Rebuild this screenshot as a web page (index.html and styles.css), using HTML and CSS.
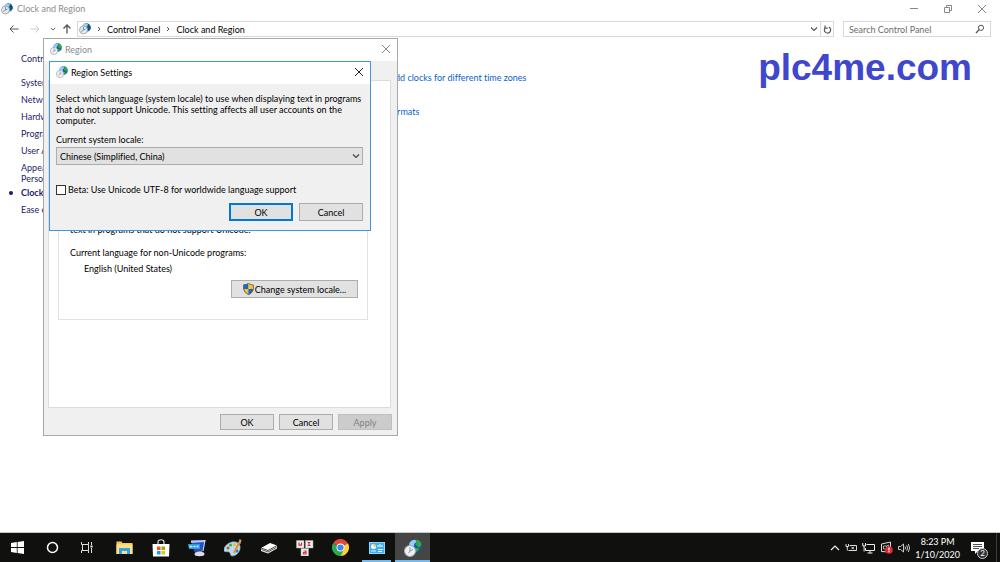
FILE: index.html
```html
<!DOCTYPE html>
<html lang="en">
<head>
<meta charset="utf-8">
<title>Clock and Region</title>
<link rel="stylesheet" href="styles.css">
</head>
<body>
<svg width="0" height="0" class="defs" aria-hidden="true">
  <defs>
    <symbol id="globe-clock" viewBox="0 0 24 24">
      <circle cx="15" cy="9" r="8.500" fill="#1b57b4"/>
      <path d="M7 6c1-3 4-5 8-5l2 3-3 2-1 4-4 1-2-2z" fill="#8fd0ee"/>
      <path d="M16 1c4 0 7 3 7.300 7l-3 3-2-1-3-3 2-2z" fill="#2fae3c"/>
      <path d="M15 12l4 0 1 2-3 3-3-1z" fill="#2fae3c"/>
      <circle cx="8" cy="16" r="7.300" fill="#eef1f4" stroke="#a3adb7" stroke-width="1.400"/>
      <path d="M8 11v5l4-2M8 16l-2 3" fill="none" stroke="#7c8996" stroke-width="1.200"/>
    </symbol>
    <symbol id="clock-globe-blue" viewBox="0 0 24 24">
      <circle cx="15" cy="9" r="8.500" fill="#2a6a9f"/>
      <path d="M10 1l8 1-2 5-5 2-5-3z" fill="#9fcfe6"/>
      <path d="M18 2c4 2 6 6 5 10l-4 4-1-6z" fill="#164f86"/>
      <circle cx="9" cy="14" r="8" fill="#dfe9ee" stroke="#8ba0ac" stroke-width="1.600"/>
      <path d="M9 8v6l4-2M9 14l-4 3" fill="none" stroke="#5f7b8c" stroke-width="1.500"/>
    </symbol>
    <symbol id="close" viewBox="0 0 10 10"><path d="M1 1l8 8M9 1l-8 8" fill="none" stroke="currentColor"/></symbol>
    <symbol id="down" viewBox="0 0 8 8"><path d="M1 2.500l3 3 3-3" fill="none" stroke="currentColor" stroke-width="1.200"/></symbol>
  </defs>
</svg>

<div class="explorer">
  <header class="titlebar">
    <svg class="app-icon"><use href="#clock-globe-blue"/></svg>
    <h1 class="window-title">Clock and Region</h1>
    <div class="window-controls">
      <button class="icon-button" aria-label="Minimize"><svg width="10" height="10" viewBox="0 0 10 10"><path d="M1 4.500h8" stroke="currentColor"/></svg></button>
      <button class="icon-button" aria-label="Restore"><svg width="10" height="10" viewBox="0 0 10 10"><path d="M1.500 3.500h5v5h-5zM3.500 3.500v-2h5v5h-2" fill="none" stroke="currentColor"/></svg></button>
      <button class="icon-button" aria-label="Close"><svg width="10" height="10"><use href="#close"/></svg></button>
    </div>
  </header>

  <nav class="navbar" aria-label="Address">
    <div class="history">
      <button class="icon-button" aria-label="Back"><svg width="10" height="10" viewBox="0 0 10 10"><path d="M9.500 5H1M4.500 1.500L1 5l3.500 3.500" fill="none" stroke="currentColor"/></svg></button>
      <button class="icon-button faded" aria-label="Forward"><svg width="10" height="10" viewBox="0 0 10 10"><path d="M.5 5H9M5.500 1.500L9 5 5.500 8.500" fill="none" stroke="currentColor"/></svg></button>
      <button class="icon-button recent" aria-label="Recent locations"><svg width="6" height="6"><use href="#down"/></svg></button>
      <button class="icon-button" aria-label="Up"><svg width="10" height="10" viewBox="0 0 10 10"><path d="M5 9.500V1M1.500 4.500L5 1l3.500 3.500" fill="none" stroke="currentColor" stroke-width="1.300"/></svg></button>
    </div>
    <div class="address">
      <svg class="app-icon"><use href="#clock-globe-blue"/></svg>
      <svg class="sep" width="4" height="6" viewBox="0 0 4 6"><path d="M1 1l2 2-2 2" fill="none" stroke="currentColor"/></svg>
      <a class="crumb" href="#">Control Panel</a>
      <svg class="sep" width="4" height="6" viewBox="0 0 4 6"><path d="M1 1l2 2-2 2" fill="none" stroke="currentColor"/></svg>
      <a class="crumb" href="#">Clock and Region</a>
      <button class="icon-button address-drop" aria-label="Previous locations"><svg width="8" height="8"><use href="#down"/></svg></button>
      <button class="icon-button refresh" aria-label="Refresh"><svg width="9" height="9" viewBox="0 0 10 10"><path d="M6.500 2.300A3.500 3.500 0 1 1 2.500 3M2.200.5v3h3" fill="none" stroke="currentColor" stroke-width="1.300"/></svg></button>
    </div>
    <div class="search">
      <input type="search" placeholder="Search Control Panel" aria-label="Search Control Panel">
      <svg width="10" height="10" viewBox="0 0 10 10"><circle cx="6" cy="3.800" r="2.600" fill="none" stroke="#555"/><path d="M4 5.800L1 9" stroke="#555" stroke-width="1.300"/></svg>
    </div>
  </nav>

  <main class="content">
    <ul class="sidebar">
      <li class="home"><a href="#">Control Panel Home</a></li>
      <li><a href="#">System and Security</a></li>
      <li><a href="#">Network and Internet</a></li>
      <li><a href="#">Hardware and Sound</a></li>
      <li><a href="#">Programs</a></li>
      <li><a href="#">User Accounts</a></li>
      <li><a href="#">Appearance and<br>Personalization</a></li>
      <li class="current"><a href="#" aria-current="page">Clock and Region</a></li>
      <li><a href="#">Ease of Access</a></li>
    </ul>
    <div class="tasks">
      <a href="#">Add clocks for different time zones</a>
      <a href="#">formats</a>
    </div>
    <p class="watermark">plc4me.com</p>
  </main>
</div>

<section class="dialog region" aria-label="Region">
  <header class="dialog-title">
    <svg class="app-icon"><use href="#globe-clock"/></svg>
    <h2>Region</h2>
    <button class="icon-button" aria-label="Close"><svg width="10" height="10"><use href="#close"/></svg></button>
  </header>
  <div class="tab-panel">
    <div class="group">
      <p>text in programs that do not support Unicode.</p>
      <p class="group-label">Current language for non-Unicode programs:</p>
      <p class="group-value">English (United States)</p>
      <button class="button shield-button">
        <svg width="11" height="12" viewBox="0 0 11 12"><path d="M5.500 0C4 1.200 2 1.600.4 1.600V5c0 3.200 2 5.500 5.100 7z" fill="#1769c4"/><path d="M5.500 0C7 1.200 9 1.600 10.600 1.600V5c0 3.200-2 5.500-5.100 7z" fill="#fcbf2d"/><path d="M.5 6h5v6C2.500 10.500.8 8.500.5 6z" fill="#fcbf2d"/><path d="M10.500 6h-5v6c3-1.500 4.700-3.500 5-6z" fill="#1769c4"/><path d="M5.500.5C4 1.500 2.200 2 .6 2v3c0 3 2 5 4.900 6.500C8.400 10 10.400 8 10.400 5V2C8.800 2 7 1.500 5.500.5z" fill="none" stroke="#54606b" stroke-width=".8"/></svg>
        <span>Change system locale...</span>
      </button>
    </div>
  </div>
  <footer class="dialog-actions">
    <button class="button">OK</button>
    <button class="button">Cancel</button>
    <button class="button" disabled>Apply</button>
  </footer>
</section>

<section class="dialog settings" role="dialog" aria-label="Region Settings">
  <header class="dialog-title">
    <svg class="app-icon"><use href="#globe-clock"/></svg>
    <h2>Region Settings</h2>
    <button class="icon-button" aria-label="Close"><svg width="10" height="10"><use href="#close"/></svg></button>
  </header>
  <form class="settings-body">
    <p class="explanation">Select which language (system locale) to use when displaying text in programs<br>that do not support Unicode. This setting affects all user accounts on the<br>computer.</p>
    <label class="locale-label" for="locale">Current system locale:</label>
    <div class="select-wrap">
      <select id="locale"><option>Chinese (Simplified, China)</option></select>
      <svg width="8" height="8"><use href="#down"/></svg>
    </div>
    <div class="check-row">
      <input type="checkbox" id="utf8">
      <label for="utf8">Beta: Use Unicode UTF-8 for worldwide language support</label>
    </div>
    <div class="settings-actions">
      <button type="button" class="button primary">OK</button>
      <button type="button" class="button">Cancel</button>
    </div>
  </form>
</section>

<footer class="taskbar">
  <div class="system-buttons">
    <button class="task" aria-label="Start"><svg width="13" height="13" viewBox="0 0 13 13"><path d="M0 2l5.800-.9v5H0zM6.600 1L13 0v6.100H6.600zM0 6.900h5.800v5L0 11zM6.600 6.900H13V13l-6.400-1z" fill="#fff"/></svg></button>
    <button class="task" aria-label="Cortana"><svg width="13" height="13" viewBox="0 0 13 13"><circle cx="6.500" cy="6.500" r="5" fill="none" stroke="#fff" stroke-width="1.500"/></svg></button>
    <button class="task" aria-label="Task View"><svg width="13" height="13" viewBox="0 0 13 13"><path d="M.5 1v2.500h7V1M.5 12V9.500h7V12M1.500 4v5M7.500 3.500v6M10.500 1v3M10.500 7v5" fill="none" stroke="#ddd"/><path d="M9.500 4.500h2v2h-2z" fill="#fff"/></svg></button>
  </div>
  <div class="apps">
    <button class="task" aria-label="File Explorer"><svg width="17" height="15" viewBox="0 0 17 15"><path d="M.5 1.500h5l1 1.500h10v11H.5z" fill="#f5c956"/><path d="M.5 4.500h16v9.500H.5z" fill="#ffe08a"/><path d="M3 14V8h11v6h-3v-3H6v3z" fill="#35a4e6"/></svg></button>
    <button class="task" aria-label="Store"><svg width="18" height="18" viewBox="0 0 18 18"><path d="M6 5V3c0-3 6-3 6 0v2" fill="none" stroke="#ddd" stroke-width="1.200"/><path d="M.5 5h17l-.5 12.500H1z" fill="#fff"/><path d="M5 7.500h3.500V11H5z" fill="#f25022"/><path d="M9.500 7.500H13V11H9.500z" fill="#7fba00"/><path d="M5 12h3.500v3.500H5z" fill="#00a4ef"/><path d="M9.500 12H13v3.500H9.500z" fill="#ffb900"/></svg></button>
    <button class="task" aria-label="Control software"><svg width="18" height="18" viewBox="0 0 18 18"><path d="M3 1.500L17.500 1l-2 11-9 1z" fill="#2b4fc0"/><path d="M3 1.500L17.500 1 17 3 3 4z" fill="#b4c6f4"/><path d="M16.500 1h1l-2 11-1 .2z" fill="#cfd8ee"/><path d="M0 5h12v5H1z" fill="#2b9be0"/><path d="M1.500 7.500h3m1 0h2m1 0h2" stroke="#d8f0ff" stroke-width="1.500"/><path d="M9 12.500l5-.5v3H9z" fill="#8d96a8"/><ellipse cx="11.500" cy="15" rx="5" ry="2.200" fill="#d9deea"/></svg></button>
    <button class="task" aria-label="Paint"><svg width="18" height="18" viewBox="0 0 18 18"><path d="M8 3c5-1 9 2 8 7-1 4-4 7-8 7-2 0-1-3-3-4s-5 1-5-2c0-4 4-7 8-8z" fill="#b8dced" stroke="#6faecf" stroke-width=".6"/><circle cx="4" cy="9" r="1.500" fill="#d94a3a"/><circle cx="6.500" cy="6" r="1.500" fill="#3caa45"/><circle cx="10.500" cy="5.500" r="1.500" fill="#f4b52c"/><circle cx="13" cy="12" r="1.500" fill="#3276cc"/><path d="M15.500 3L10 14" stroke="#e68b2c" stroke-width="2"/><path d="M14.500 4l1-4 2 1-1 4z" fill="#c99b6b"/></svg></button>
    <button class="task" aria-label="PLC tool"><svg width="18" height="13" viewBox="0 0 18 13"><path d="M1 7l9-5 7 2.500-9 5z" fill="#fff"/><path d="M1 7v3l7 2.500v-3zM8 9.500v3l9-5v-3z" fill="#f4f4f4"/><path d="M1.500 8.500L8 11l8.500-4.700M1 7l7 2.500 9-5" fill="none" stroke="#333" stroke-width=".8"/></svg></button>
    <button class="task" aria-label="UI software"><svg width="18" height="16" viewBox="0 0 18 16"><g fill="#eeeeef" stroke="#aaa" stroke-width=".5"><path d="M.5.500h7.500v7.500H.5zM9.500.500H17v7.500H9.500zM5 8.500h7.500V16H5z"/></g><path d="M3 2.500v2.700h2.500V2.500M11.500 2.500h3m-1.500 0V5.500m-1.500 0h3M7.500 11h2.500v3H7.500v-1.500H10" fill="none" stroke="#d93434" stroke-width="1.200"/></svg></button>
    <button class="task" aria-label="Chrome"><svg width="17" height="17" viewBox="0 0 18 18"><path d="M9 9L1.200 4.500A9 9 0 0 1 16.800 4.500z" fill="#e3473a"/><path d="M9 9h-.1L1.200 4.500A9 9 0 0 0 9 18l3.500-7z" fill="#2da94f"/><path d="M9 9l7.800-4.500A9 9 0 0 1 9 18l3.500-7z" fill="#fdd13b"/><circle cx="9" cy="9" r="4.200" fill="#fff"/><circle cx="9" cy="9" r="3.300" fill="#4285f4"/></svg></button>
    <button class="task running" aria-label="Control Panel"><svg width="16" height="12" viewBox="0 0 16 12"><path d="M0 0h16v12H0z" fill="#8fd8f8"/><path d="M1 1h14v10H1z" fill="#3fb0ea"/><circle cx="4.500" cy="4.500" r="2.500" fill="#fff"/><path d="M4.500 4.500V2A2.500 2.500 0 0 1 7 4.500z" fill="#f4b52c"/><path d="M9 5V3m2 2V2m2 3V3M2 9h5m2-1.500h5M9 9.500h4" stroke="#e5f6ff" stroke-width="1.200"/></svg></button>
    <button class="task active" aria-label="Clock and Region"><svg width="18" height="18"><use href="#globe-clock"/></svg></button>
  </div>
  <div class="tray">
    <button class="icon-button" aria-label="Show hidden icons"><svg width="10" height="10" viewBox="0 0 10 10"><path d="M1 7l4-4 4 4" fill="none" stroke="currentColor" stroke-width="1.200"/></svg></button>
    <svg width="12" height="12" viewBox="0 0 12 12"><path d="M4.500 3.500h7v5h-8M6.500 4.800l2.500 2.500M9 4.800L6.500 7.300M1 2v2.500h2.500V2M2.300 4.500v4" fill="none" stroke="#ddd"/></svg>
    <svg width="13" height="12" viewBox="0 0 13 12"><path d="M4.500 2.500h8v6H3.500V6M5.500 11h5M8 8.500V11M.8 1v3h2.700V1M2.100 4v5.500" fill="none" stroke="#eee"/></svg>
    <svg width="13" height="13" viewBox="0 0 13 13"><path d="M1.500 3l9-2v10l-9-.5z" fill="none" stroke="#ddd"/><path d="M3.500 8V5h3v3zM6.500 5l2-1v3" fill="none" stroke="#ccc" stroke-width=".8"/><circle cx="9" cy="9" r="3.800" fill="#e02a33"/><path d="M9 6.500v3M9 10.300v1" stroke="#fff" stroke-width="1.200"/></svg>
    <svg width="12" height="12" viewBox="0 0 12 12"><path d="M.5 4.500h2l3-2.500v8l-3-2.500h-2zM7 4.500q1 1.500 0 3M8.700 3.300q1.800 2.700 0 5.400M10.300 2q2.600 4 0 8" fill="none" stroke="#ddd" stroke-width=".9"/></svg>
    <time class="clock" datetime="2020-01-10T20:23"><span>8:23 PM</span><span>1/10/2020</span></time>
    <button class="notifications" aria-label="2 notifications">
      <svg width="13" height="12" viewBox="0 0 13 12"><path d="M0 0h13v9H7l-3 3V9H0z" fill="#fff"/><path d="M2 2.500h9M2 4.500h9M2 6.500h6" stroke="#222" stroke-width=".8"/></svg>
      <span class="badge">2</span>
    </button>
  </div>
</footer>
</body>
</html>
```

FILE: styles.css
```css
* { box-sizing: border-box; }

body {
  margin: 0;
  min-height: 100vh;
  display: flex;
  flex-direction: column;
  background: #fff;
  color: #000;
  font: 9px/11px Lato, "Open Sans", sans-serif;
  font-variant-ligatures: none;
}

h1, h2, p, ul { margin: 0; padding: 0; font: inherit; }
ul { list-style: none; }
a { color: inherit; text-decoration: none; }
button, input, select { font: inherit; color: inherit; }
svg { display: block; flex: none; }
.defs { position: absolute; }

.icon-button {
  display: flex;
  align-items: center;
  justify-content: center;
  padding: 0;
  border: 0;
  background: none;
  color: #555;
}
.app-icon { width: 12px; height: 12px; }

/* Explorer window */
.explorer { flex: 1; display: flex; flex-direction: column; border-bottom: 1px solid #c8c8c8; }
.titlebar { display: flex; align-items: center; gap: 4px; height: 17px; padding: 0 13px 0 1px; }
.window-title { flex: 1; color: #8c8c8c; }
.window-controls { display: flex; gap: 24px; }
.window-controls .icon-button { color: #888; }

.navbar { display: flex; align-items: center; gap: 9px; padding: 4px 9px 0 9px; }
.history { display: flex; align-items: center; gap: 11px; margin-right: -4px; }
.history .recent { margin: 0 -5px 0 -1px; }
.history .faded { color: #ccc; }
.address, .search { display: flex; align-items: center; height: 16px; border: 1px solid #d9d9d9; }
.address { flex: 1; gap: 6px; padding-left: 1px; }
.sep { color: #555; }
.address-drop { margin-left: auto; margin-right: -4px; }
.refresh { width: 13px; align-self: stretch; border-left: 1px solid #d9d9d9; }
.search { width: 148px; padding: 0 5px; }
.search input { flex: 1; min-width: 0; padding: 0; border: 0; background: none; outline: 0; }
.search input::placeholder { color: #6d6d6d; opacity: 1; }

.content { flex: 1; display: flex; align-items: flex-start; justify-content: space-between; padding: 9px 28px 0 21px; }
.sidebar { width: 110px; padding-top: 7px; color: #1d1d6b; display: flex; flex-direction: column; gap: 6px; }
.home { margin-bottom: 7px; }
.current { position: relative; margin-top: -3px; font-weight: bold; }
.current::before { content: ""; position: absolute; left: -12px; top: 4px; width: 4px; height: 4px; border-radius: 50%; background: #1a1a6b; }
.tasks { flex: 1; display: flex; flex-direction: column; align-items: flex-start; gap: 23px; padding: 26px 0 0 258px; color: #0b5fcb; }
.watermark { font: bold 37px/44px "Liberation Sans", sans-serif; color: #3f48cc; }

/* Dialogs */
.dialog { position: absolute; display: flex; flex-direction: column; background: #f0f0f0; }
.dialog-title { display: flex; align-items: center; gap: 3px; height: 22px; padding: 0 6px 2px; background: #fff; }
.dialog-title h2 { flex: 1; }
.region { left: 43px; top: 38px; width: 355px; border: 1px solid #a8a8a8; }
.region .dialog-title h2, .region .dialog-title .icon-button { color: #8c8c8c; }
.settings { left: 49px; top: 61px; width: 322px; border: 1px solid #3f96dd; }
.settings .icon-button { color: #222; }

.tab-panel { margin: 19px 6px 0 4px; padding: 0 22px 87px 9px; border: 1px solid #dcdcdc; background: #fff; }
.group { display: flex; flex-direction: column; padding: 143px 9px 21px 11px; border: 1px solid #e2e2e2; border-top: 0; }
.group-label { margin-top: 12px; }
.group-value { margin: 5px 0 6px 14px; }

.button { display: flex; align-items: center; justify-content: center; height: 18px; padding: 0 4px; border: 1px solid #adadad; background: #e1e1e1; }
.shield-button { align-self: flex-end; width: 127px; gap: 1px; }
.dialog-actions { display: flex; justify-content: flex-end; gap: 5px; padding: 6px 5px 5px; }
.dialog-actions .button { width: 54px; height: 16px; }
.button:disabled { border-color: #bfbfbf; background: #ccc; color: #838383; }

.settings-body { display: flex; flex-direction: column; padding: 9px 7px 9px 6px; }
.explanation { white-space: nowrap; }
.locale-label { margin: 8px 0 2px; }
.select-wrap { display: grid; align-items: center; }
.select-wrap > * { grid-area: 1 / 1; }
.select-wrap select { height: 18px; width: 100%; padding: 0 3px; appearance: none; border: 1px solid #adadad; border-radius: 0; background: #e1e1e1; }
.select-wrap svg { justify-self: end; margin-right: 3px; color: #444; pointer-events: none; }
.check-row { display: flex; align-items: center; gap: 2px; margin: 19px 0 8px; }
.check-row input { appearance: none; width: 10px; height: 10px; margin: 0; border: 1px solid #333; background: #fff; }
.settings-actions { display: flex; justify-content: flex-end; gap: 6px; }
.settings-actions .button { width: 64px; }
.settings-actions .primary { border: 2px solid #0078d7; }

/* Taskbar */
.taskbar { display: flex; align-items: stretch; height: 29px; background: #10110e; color: #fff; }
.system-buttons { display: flex; }
.apps { display: flex; gap: 1px; margin-left: 2px; }
.task { display: flex; align-items: center; justify-content: center; width: 35px; padding: 0; border: 0; background: none; }
.running { background: linear-gradient(#76b9ed, #76b9ed) center bottom / 29px 2px no-repeat; }
.active { background: #454545; border-bottom: 2px solid #76b9ed; padding-top: 2px; }
.tray { display: flex; align-items: center; gap: 5px; margin-left: auto; padding-right: 3px; }
.tray .icon-button { color: #eee; }
.clock { display: flex; flex-direction: column; align-items: center; line-height: 13px; margin-right: 6px; }
.notifications { position: relative; display: flex; align-items: center; width: 26px; padding: 0; border: 0; border-right: 1px solid #3a3a3a; background: none; align-self: stretch; }
.badge { position: absolute; left: 6px; bottom: 3px; width: 11px; height: 11px; border: 1px solid #ccc; border-radius: 50%; background: #333; color: #fff; font-size: 8px; line-height: 9px; text-align: center; }
```
